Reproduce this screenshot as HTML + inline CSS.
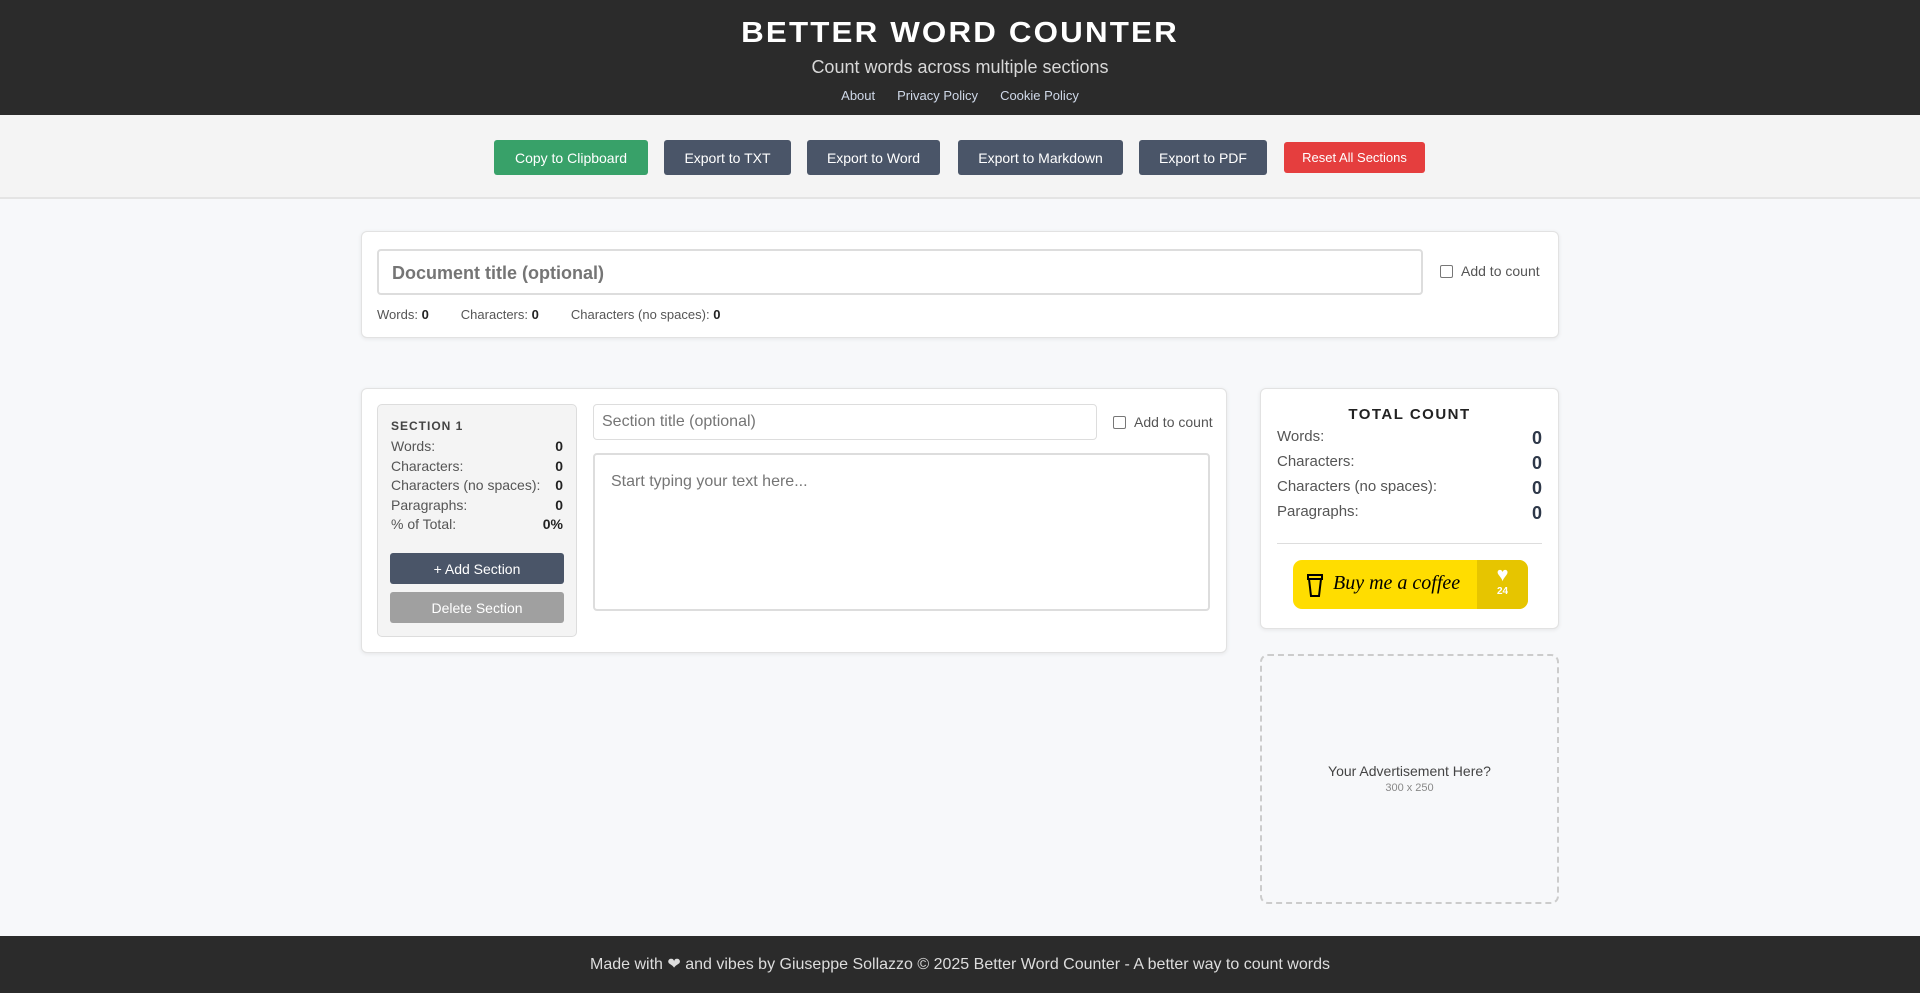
<!DOCTYPE html>
<html><head><meta charset="utf-8"><style>
*{box-sizing:border-box;margin:0;padding:0}
body{width:1920px;height:993px;background:#f7f8fa;font-family:"Liberation Sans",sans-serif;position:relative;overflow:hidden;color:#333}
.abs{position:absolute}
header{position:absolute;left:0;top:0;width:1920px;height:115px;background:#2b2b2b;color:#fff;text-align:center}
h1{position:absolute;top:17px;width:100%;font-size:29px;letter-spacing:2px;font-weight:bold;transform:scaleX(1.08)}
.sub{position:absolute;top:57px;width:100%;font-size:18px;color:#d8d8d8}
.links{position:absolute;top:88px;width:100%;font-size:13px;color:#cfd8e8}
.links span{margin:0 11px}
.bar{position:absolute;top:115px;left:0;width:1920px;height:84px;background:#f4f4f4;border-bottom:2px solid #e4e4e4}
.btn{position:absolute;top:140px;height:35px;border-radius:3px;background:#4a5568;color:#fff;font-size:14px;display:flex;align-items:center;justify-content:center}
.card{position:absolute;background:#fff;border:1px solid #e2e2e2;border-radius:6px;box-shadow:0 1px 4px rgba(0,0,0,.08)}
.inp{position:absolute;background:#fff;border:2px solid #ddd;border-radius:4px;color:#757575}
.cb{display:inline-block;width:13px;height:13px;border:1px solid #777;border-radius:2px;vertical-align:-2px;margin-right:8px}
.row{display:flex;justify-content:space-between;font-size:14px;color:#555;height:19.5px}
.row b{color:#222}
.trow{display:flex;justify-content:space-between;font-size:15px;color:#555;height:25px}
.trow b{color:#2d3748;font-size:18px}
</style></head><body>
<header>
<h1>BETTER WORD COUNTER</h1>
<div class="sub">Count words across multiple sections</div>
<div class="links"><span>About</span><span>Privacy Policy</span><span>Cookie Policy</span></div>
</header>
<div class="bar"></div>
<div class="btn" style="left:494px;width:154px;background:#38a169">Copy to Clipboard</div>
<div class="btn" style="left:664px;width:127px">Export to TXT</div>
<div class="btn" style="left:807px;width:133px">Export to Word</div>
<div class="btn" style="left:958px;width:165px">Export to Markdown</div>
<div class="btn" style="left:1139px;width:128px">Export to PDF</div>
<div class="btn" style="left:1284px;width:141px;top:142px;height:31px;background:#e53e3e;font-size:13px">Reset All Sections</div>

<div class="card" style="left:361px;top:231px;width:1198px;height:107px"></div>
<div class="inp" style="left:377px;top:249px;width:1046px;height:46px;font-size:18px;font-weight:bold;padding:12px 13px">Document title (optional)</div>
<div class="abs" style="left:1440px;top:263px;font-size:14px;color:#555"><span class="cb"></span>Add to count</div>
<div class="abs" style="left:377px;top:307px;font-size:13px;color:#555">Words: <b style="color:#222">0</b><span style="margin-left:32px">Characters: <b style="color:#222">0</b></span><span style="margin-left:32px">Characters (no spaces): <b style="color:#222">0</b></span></div>

<div class="card" style="left:361px;top:388px;width:866px;height:265px"></div>
<div class="abs" style="left:377px;top:404px;width:200px;height:233px;background:#f4f4f4;border:1px solid #ddd;border-radius:5px;padding:14px 13px">
<div style="font-size:12px;font-weight:bold;letter-spacing:1px;color:#444;margin-bottom:5px">SECTION 1</div>
<div class="row"><span>Words:</span><b>0</b></div>
<div class="row"><span>Characters:</span><b>0</b></div>
<div class="row"><span>Characters (no spaces):</span><b>0</b></div>
<div class="row"><span>Paragraphs:</span><b>0</b></div>
<div class="row"><span>% of Total:</span><b>0%</b></div>
</div>
<div class="btn" style="left:390px;top:553px;width:174px;height:31px;font-size:14px">+ Add Section</div>
<div class="btn" style="left:390px;top:592px;width:174px;height:31px;font-size:14px;background:#a0a0a0">Delete Section</div>
<div class="inp" style="left:593px;top:404px;width:504px;height:36px;font-size:16px;padding:8px 8px;border-width:1px">Section title (optional)</div>
<div class="abs" style="left:1113px;top:414px;font-size:14px;color:#555"><span class="cb"></span>Add to count</div>
<div class="inp" style="left:593px;top:453px;width:617px;height:158px;font-size:16px;padding:18px 16px">Start typing your text here...</div>

<div class="card" style="left:1260px;top:388px;width:299px;height:241px;padding:17px 16px">
<div style="text-align:center;font-weight:bold;font-size:15px;letter-spacing:1.5px;color:#222;margin-bottom:5px">TOTAL COUNT</div>
<div class="trow"><span>Words:</span><b>0</b></div>
<div class="trow"><span>Characters:</span><b>0</b></div>
<div class="trow"><span>Characters (no spaces):</span><b>0</b></div>
<div class="trow"><span>Paragraphs:</span><b>0</b></div>
<div style="border-top:1px solid #ddd;margin-top:15px"></div>
</div>
<div class="abs" style="left:1293px;top:560px;width:235px;height:49px;background:#ffdd00;border-radius:9px;overflow:hidden">
<svg class="abs" style="left:12px;top:12px" width="20" height="26" viewBox="0 0 20 26"><path d="M3 3h14v4H3z M4 7l2 17h8l2-17" fill="none" stroke="#000" stroke-width="2"/></svg>
<div class="abs" style="left:40px;top:12px;font-family:'Liberation Serif',serif;font-style:italic;font-size:20px;color:#000">Buy me a coffee</div>
<div class="abs" style="left:184px;top:0;width:51px;height:49px;background:#e6c500;color:#fff;text-align:center;font-size:10px;font-weight:bold;padding-top:4px"><div style="font-size:20px;line-height:22px">♥</div>24</div>
</div>
<div class="abs" style="left:1260px;top:654px;width:299px;height:250px;border:2px dashed #ccc;border-radius:8px;text-align:center;padding-top:107px">
<div style="font-size:14px;color:#444">Your Advertisement Here?</div>
<div style="font-size:11px;color:#888;margin-top:3px">300 x 250</div>
</div>
<div class="abs" style="left:0;top:936px;width:1920px;height:57px;background:#2b2b2b;color:#ddd;font-size:16px;text-align:center;line-height:57px">Made with ❤ and vibes by Giuseppe Sollazzo © 2025 Better Word Counter - A better way to count words</div>
</body></html>
